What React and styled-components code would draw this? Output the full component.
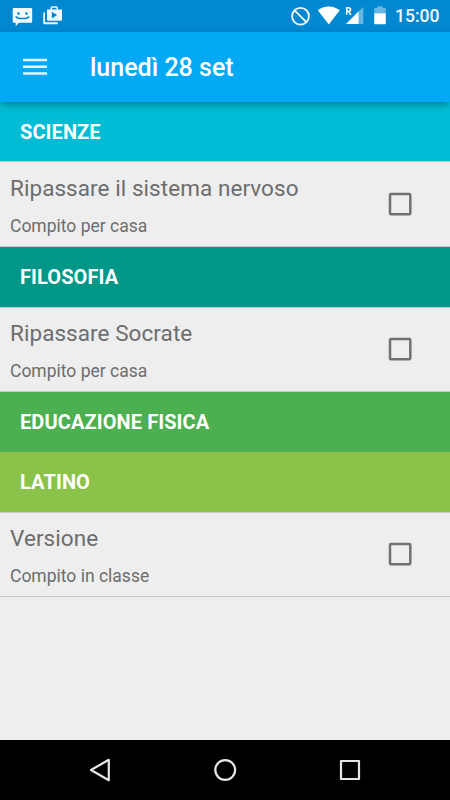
import React from 'react';
import styled, { createGlobalStyle } from 'styled-components';

const GlobalStyle = createGlobalStyle`
  * { box-sizing: border-box; }
  body { margin: 0; background: #eee; font-family: Roboto, "Liberation Sans", sans-serif; }
  svg { display: block; flex: none; }
`;

const Screen = styled.div`
  width: 450px;
  height: 800px;
  display: flex;
  flex-direction: column;
  overflow: hidden;
  background: #eeeeee;
`;

const StatusBar = styled.header`
  height: 31.5px;
  flex: none;
  display: flex;
  align-items: flex-start;
  justify-content: space-between;
  background: #0288d1;
`;

const Clock = styled.time`
  width: 55px;
  color: #f3faff;
  font-size: 17.5px;
  font-weight: 500;
  line-height: 33px;
  white-space: nowrap;
`;

const StatusGroup = styled.div`
  display: flex;
  gap: 5px;
`;

const Toolbar = styled.div`
  height: 70.2px;
  flex: none;
  display: flex;
  align-items: center;
  padding-left: 23px;
  gap: 43px;
  position: relative;
  z-index: 1;
  background: #03a9f4;
  box-shadow: 0 3px 8px -1px rgba(0, 0, 0, 0.36);
`;

const MenuButton = styled.button`
  border: 0;
  padding: 0;
  width: 24px;
  height: 18px;
  background: none;
`;

const Title = styled.h1`
  margin: 3px 0 0;
  color: #fff;
  font-size: 25px;
  line-height: 32px;
  font-weight: 500;
`;

const List = styled.main`
  flex: 1;
`;

const SubjectHeader = styled.h2`
  margin: 0;
  height: ${({ $tall }) => ($tall ? 60 : 59.8)}px;
  padding-left: 20px;
  color: #fff;
  background: ${({ $color }) => $color};
  font-size: 20px;
  font-weight: 700;
  line-height: 61.5px;
  letter-spacing: 0.1px;
`;

const Task = styled.div`
  height: 85.3px;
  display: flex;
  align-items: center;
  justify-content: space-between;
  padding: 0 38px 0 10px;
  border-top: 1px solid #c6c6c6;
  border-bottom: 1px solid #c6c6c6;
  color: #6d6d6d;
`;

const TaskText = styled.div`
  display: flex;
  flex-direction: column;
  gap: 10px;
  padding-top: 6px;
`;

const TaskTitle = styled.div`
  font-size: 22.5px;
  line-height: 28px;
  letter-spacing: 0.06px;
`;

const TaskKind = styled.div`
  font-size: 17.5px;
  line-height: 28px;
`;

const Checkbox = styled.span`
  width: 24px;
  height: 24px;
  margin-bottom: 1px;
`;

const NavBar = styled.nav`
  height: 60px;
  flex: none;
  display: flex;
  align-items: center;
  justify-content: space-between;
  padding: 0 88px;
  background: #000;
`;

const subjects = [
  { name: 'SCIENZE', color: '#00bcd4', task: 'Ripassare il sistema nervoso', kind: 'Compito per casa' },
  { name: 'FILOSOFIA', color: '#009688', task: 'Ripassare Socrate', kind: 'Compito per casa' },
  { name: 'EDUCAZIONE FISICA', color: '#4caf50' },
  { name: 'LATINO', color: '#8bc34a', task: 'Versione', kind: 'Compito in classe' },
];

const NotificationIcons = () => (
  <svg width="80" height="31" fill="#f2f9fd">
    <path d="M14 8H31Q32.2 8 32.2 9.200V21.500Q32.200 22.700 31 22.700H19L15.700 26.300V22.700H14Q12.700 22.700 12.700 21.500V9.200Q12.700 8 14 8Z" />
    <g fill="#0288d1">
      <circle cx="18.500" cy="13.500" r="1.300" />
      <circle cx="26.500" cy="13.500" r="1.300" />
    </g>
    <path d="M15.800 16.300Q17 18.500 22.500 18.500T29.200 16.300" fill="none" stroke="#0288d1" strokeWidth="1.500" />
    <path d="M43.300 12.500H45V22.300H57.700V24.200H44.500Q43.300 24.200 43.300 23Z" />
    <path fillRule="evenodd" d="M47 9.500H50.500V8Q50.500 6.300 52.200 6.300H56.300Q58 6.300 58 8V9.500H62V19.500Q62 20.800 60.700 20.800H48.200Q47 20.800 47 19.500ZM52 9.500H56.500V7.800H52ZM51.800 11.800V18.400L57.200 15Z" />
  </svg>
);

const SystemIcons = () => (
  <svg width="110" height="31" viewBox="280 0 110 31" fill="#fff">
    <g fill="none" stroke="#eef8fe" strokeWidth="1.800">
      <circle cx="300.500" cy="16.200" r="8.400" />
      <path d="M294.600 10.300 306.400 22.100" />
    </g>
    <path d="M317.800 10.300Q322.500 6.400 328.700 6.400T339.800 10.300L328.800 24.400Z" />
    <path d="M363.300 6.700V24H346Z" opacity=".4" />
    <path d="M358.500 11.500V24H346Z" />
    <path d="M346.700 14.800V7.700H348.700Q350.600 7.700 350.600 9.500T348.700 11.300H346.700M348.500 11.300 350.900 14.800" fill="none" stroke="#fff" strokeWidth="1.500" />
    <path d="M374.200 8H377.300V6.300H382.500V8H385.800V13.200H374.200Z" opacity=".4" />
    <path d="M374.200 13.200H385.800V23.200Q385.800 24.300 384.800 24.300H375.200Q374.200 24.300 374.200 23.200Z" />
  </svg>
);

const MenuIcon = () => (
  <svg width="24" height="18" stroke="#e6f6ff" strokeWidth="2.500">
    <path d="M0 1.900H24M0 8.700H24M0 15.500H24" />
  </svg>
);

const CheckboxIcon = () => (
  <svg width="24" height="24" fill="none" stroke="#717171" strokeWidth="2.500">
    <rect x="2" y="2" width="20.300" height="20.300" rx="1" />
  </svg>
);

const NavIcon = ({ children }) => (
  <svg width="24" height="26" fill="none" stroke="#e6e6e6" strokeWidth="2.200" strokeLinejoin="round">
    {children}
  </svg>
);

export default function App() {
  return (
    <>
      <GlobalStyle />
      <Screen>
        <StatusBar>
          <NotificationIcons />
          <StatusGroup>
            <SystemIcons />
            <Clock>15:00</Clock>
          </StatusGroup>
        </StatusBar>
        <Toolbar>
          <MenuButton aria-label="Menu"><MenuIcon /></MenuButton>
          <Title>lunedì 28 set</Title>
        </Toolbar>
        <List>
          {subjects.map(({ name, color, task, kind }) => (
            <section key={name}>
              <SubjectHeader $color={color} $tall={!task}>{name}</SubjectHeader>
              {task && (
                <Task>
                  <TaskText>
                    <TaskTitle>{task}</TaskTitle>
                    <TaskKind>{kind}</TaskKind>
                  </TaskText>
                  <Checkbox role="checkbox" aria-checked="false" aria-label={task}>
                    <CheckboxIcon />
                  </Checkbox>
                </Task>
              )}
            </section>
          ))}
        </List>
        <NavBar>
          <NavIcon><path d="M3 13 20.800 2.800V23.200Z" /></NavIcon>
          <NavIcon><circle cx="12.200" cy="13" r="9.900" /></NavIcon>
          <NavIcon><rect x="3" y="4" width="18" height="18" /></NavIcon>
        </NavBar>
      </Screen>
    </>
  );
}
